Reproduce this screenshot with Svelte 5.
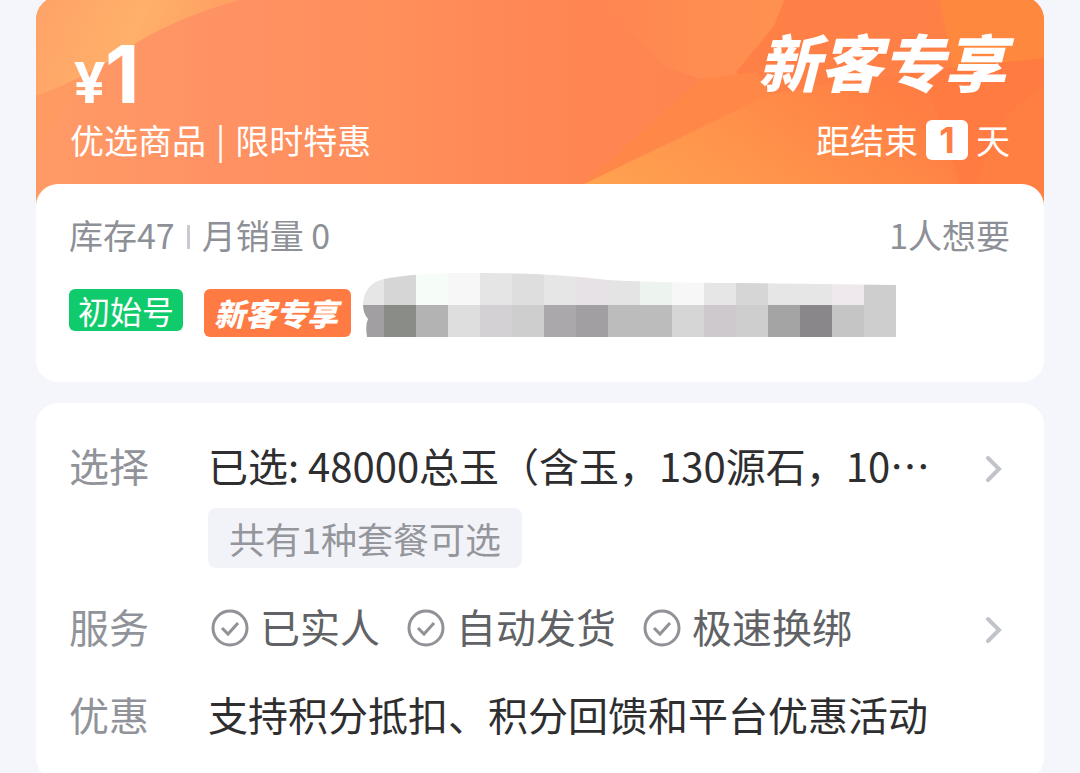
<script>
  const services = ['已实人', '自动发货', '极速换绑'];

  // [x, width, colour] of each block, in the mask's own units
  const upper = [
    [0, 21, '#e6e6e6'], [21, 32, '#d6d6d6'], [53, 32, '#f6fdf8'], [85, 32, '#f7f7f7'],
    [117, 32, '#e5e5e5'], [149, 32, '#dedede'], [181, 32, '#e6e6e6'], [213, 32, '#e6e2e6'],
    [245, 32, '#e4e4e4'], [277, 32, '#edf3ee'], [309, 32, '#f7f7f7'], [341, 32, '#e6e6e6'],
    [373, 32, '#d6d6d6'], [405, 64, '#e6e6e6'], [469, 32, '#efe9ed'], [501, 32, '#cecece'],
  ];
  const lower = [
    [0, 21, '#a29fa2'], [21, 32, '#8a8c87'], [53, 32, '#b3b3b3'], [85, 32, '#dedede'],
    [117, 32, '#d4d1d4'], [149, 32, '#cecece'], [181, 32, '#aaa8aa'], [213, 32, '#a29fa2'],
    [245, 64, '#bcbcbc'], [309, 32, '#d6d6d6'], [341, 32, '#cdc9cd'], [373, 32, '#cecece'],
    [405, 32, '#a4a4a4'], [437, 32, '#8a878a'], [469, 32, '#c5c5c5'], [501, 32, '#cecece'],
  ];
</script>

{#snippet chevron()}
  <svg class="chevron" viewBox="0 0 18 28" aria-hidden="true">
    <path d="M3 3 L14 14 L3 25" fill="none" stroke="#c0c3c9" stroke-width="4" stroke-linecap="round" />
  </svg>
{/snippet}

<main>
  <header class="banner">
    <svg class="rays" viewBox="0 0 1008 216" preserveAspectRatio="none" aria-hidden="true">
      <defs>
        <linearGradient id="base">
          <stop offset="0" stop-color="#ff9a66" />
          <stop offset="0.2" stop-color="#ff9163" />
          <stop offset="0.35" stop-color="#ff8f5b" />
          <stop offset="0.5" stop-color="#ff8755" />
          <stop offset="1" stop-color="#ff7f42" />
        </linearGradient>
        <linearGradient id="glow" x1="0" x2="1" y1="0.4" y2="0.6">
          <stop offset="0" stop-color="#ffa468" />
          <stop offset="0.45" stop-color="#ffb069" />
          <stop offset="1" stop-color="#ff9a60" />
        </linearGradient>
        <linearGradient id="haze">
          <stop offset="0" stop-color="#ff8d50" stop-opacity="0" />
          <stop offset="0.6" stop-color="#ff8d50" />
          <stop offset="1" stop-color="#ff9150" />
        </linearGradient>
        <linearGradient id="beam" x1="0" x2="1" y1="1" y2="0.5">
          <stop offset="0" stop-color="#ffa550" />
          <stop offset="0.5" stop-color="#ff944c" />
          <stop offset="1" stop-color="#ff7e43" />
        </linearGradient>
      </defs>
      <rect width="1008" height="216" fill="url(#base)" />
      <path d="M0 100 Q55 80 100 47 Q145 20 204 4 V0 H0 Z" fill="url(#glow)" />
      <path d="M0 100 Q35 88 60 76 Q28 108 0 160 Z" fill="#ff9b62" />
      <path d="M560 0 H750 L720 77 L665 83 L630 72 Z" fill="url(#haze)" />
      <path d="M750 0 H910 L895 70 L720 100 L700 76 L738 30 Z" fill="#ff8047" />
      <path d="M665 83 L720 76 L735 100 L548 188 Z" fill="#ff8849" />
      <path d="M548 188 L735 98 L885 75 L900 120 L930 216 H548 Z" fill="url(#beam)" />
      <path d="M903 0 H1008 V62 L918 75 Z" fill="#ff883f" />
      <path d="M885 75 L1008 62 V88 L940 188 H925 Z" fill="#ff7b42" />
      <path d="M1008 88 L970 120 L940 188 V216 H1008 Z" fill="#ff7f42" />
    </svg>
    <div class="banner-line">
      <p class="price"><span class="yen">¥</span>1</p>
      <strong class="slogan">新客专享</strong>
    </div>
    <div class="banner-line">
      <p>优选商品<span class="bar">|</span>限时特惠</p>
      <p class="countdown">距结束<b>1</b>天</p>
    </div>
  </header>

  <section class="card summary">
    <div class="stats">
      <span>库存47</span>
      <i></i>
      <span>月销量 0</span>
      <span class="wanted">1人想要</span>
    </div>
    <div class="tags">
      <span class="tag-new">初始号</span>
      <span class="tag-guest">新客专享</span>
      <svg class="mosaic" viewBox="0 0 533 64" aria-hidden="true">
        <clipPath id="smear">
          <path d="M0 32 C0 18 8 9 21 6 Q55 -1 117 0 Q190 0 245 7 Q300 10 373 10 L533 12 V64 H4 Q2 52 5 46 Q0 40 0 32 Z" />
        </clipPath>
        <g clip-path="url(#smear)" shape-rendering="crispEdges">
          {#each upper as [x, width, fill]}
            <rect {x} y="0" {width} height="32" {fill} />
          {/each}
          {#each lower as [x, width, fill]}
            <rect {x} y="32" {width} height="32" {fill} />
          {/each}
        </g>
      </svg>
    </div>
  </section>

  <section class="card details">
    <div class="row">
      <h2>选择</h2>
      <div class="value">
        <p class="chosen">已选: 48000总玉（含玉，130源石，10…</p>
        <span class="package">共有1种套餐可选</span>
      </div>
      <button aria-label="选择">{@render chevron()}</button>
    </div>
    <div class="row">
      <h2>服务</h2>
      <ul class="value services">
        {#each services as service}
          <li>
            <svg viewBox="0 0 38 38" aria-hidden="true">
              <g fill="none" stroke="#909298" stroke-width="3">
                <circle cx="19" cy="19" r="17" />
                <path d="M11 19 L17 25 L27 14" />
              </g>
            </svg>
            {service}
          </li>
        {/each}
      </ul>
      <button aria-label="服务">{@render chevron()}</button>
    </div>
    <div class="row">
      <h2>优惠</h2>
      <p class="value">支持积分抵扣、积分回馈和平台优惠活动</p>
    </div>
  </section>
</main>

<style>
  :global(body) {
    background: #f5f6fb;
    overflow: hidden;
  }

  main {
    padding: 0 36px;
    font-family: "Noto Sans CJK SC", sans-serif;
    color: #2e2e30;
  }

  p, h2, ul {
    margin: 0;
    padding: 0;
    font-weight: 400;
  }

  .banner {
    position: relative;
    margin-top: -4px;
    padding: 36px 34px 48px;
    border-radius: 24px 24px 0 0;
    overflow: hidden;
    color: #fff;
    font-size: 34px;
    line-height: 48px;
  }

  .rays {
    position: absolute;
    inset: 0;
    width: 100%;
    height: 100%;
  }

  .banner-line {
    position: relative;
    display: flex;
    justify-content: space-between;
    align-items: flex-start;
  }

  .price {
    padding-left: 4px;
    font: 700 80px/84px Inter, sans-serif;
  }

  .yen {
    font-family: Roboto, sans-serif;
    font-size: 58px;
    line-height: 58px;
  }

  .slogan {
    margin-right: 4px;
    font-size: 62px;
    font-style: italic;
    font-weight: 900;
    line-height: 56px;
  }

  .bar {
    margin: 0 10px;
  }

  .countdown {
    display: flex;
    align-items: center;
    gap: 8px;
  }

  .countdown b {
    width: 42px;
    border-radius: 6px;
    background: #fff;
    color: #ff7d42;
    font: 700 36px/40px Inter, sans-serif;
    text-align: center;
  }

  .card {
    position: relative;
    border-radius: 22px;
    background: #fff;
  }

  .summary {
    margin-top: -28px;
    padding: 27px 34px 45px 33px;
  }

  .stats {
    display: flex;
    align-items: center;
    color: #8d9096;
    font-size: 34px;
    line-height: 48px;
  }

  .stats i {
    width: 3px;
    height: 24px;
    margin: 4px 12px 0;
    background: #c8cad0;
  }

  .wanted {
    margin-left: auto;
  }

  .tags {
    display: flex;
    align-items: flex-start;
    margin-top: 14px;
  }

  .tag-new {
    margin-top: 16px;
    padding: 0 9px;
    border-radius: 6px;
    background: #10cb6b;
    color: #fff;
    font-size: 32px;
    line-height: 42px;
  }

  .tag-guest {
    margin: 16px 12px 0 21px;
    padding: 0 13px 0 10px;
    border-radius: 6px;
    background: #ff7b43;
    color: #fff;
    font-size: 31px;
    font-style: italic;
    font-weight: 900;
    line-height: 48px;
  }

  .mosaic {
    width: 533px;
    height: 64px;
  }

  .details {
    display: grid;
    gap: 28px;
    margin-top: 21px;
    padding: 32px 34px 36px 33px;
    font-size: 40px;
    line-height: 60px;
  }

  .row {
    display: flex;
    align-items: flex-start;
  }

  h2 {
    width: 139px;
    color: #909399;
    font-size: 40px;
  }

  .value {
    flex: 1;
    min-width: 0;
  }

  .chosen {
    overflow: hidden;
    white-space: nowrap;
  }

  .package {
    display: inline-block;
    margin-top: 13px;
    padding: 0 21px;
    border-radius: 8px;
    background: #f2f3f8;
    color: #94969b;
    font-size: 36px;
    vertical-align: top;
  }

  .services {
    display: flex;
    gap: 24px;
    color: #606266;
    list-style: none;
  }

  .services li {
    display: flex;
    align-items: center;
    gap: 11px;
    padding-left: 3px;
  }

  .services svg {
    width: 38px;
    height: 38px;
    margin-top: 4px;
  }

  button {
    display: flex;
    align-items: center;
    box-sizing: border-box;
    height: 60px;
    padding: 8px 7px 0;
    border: none;
    background: none;
  }

  .chevron {
    width: 18px;
    height: 28px;
  }
</style>
